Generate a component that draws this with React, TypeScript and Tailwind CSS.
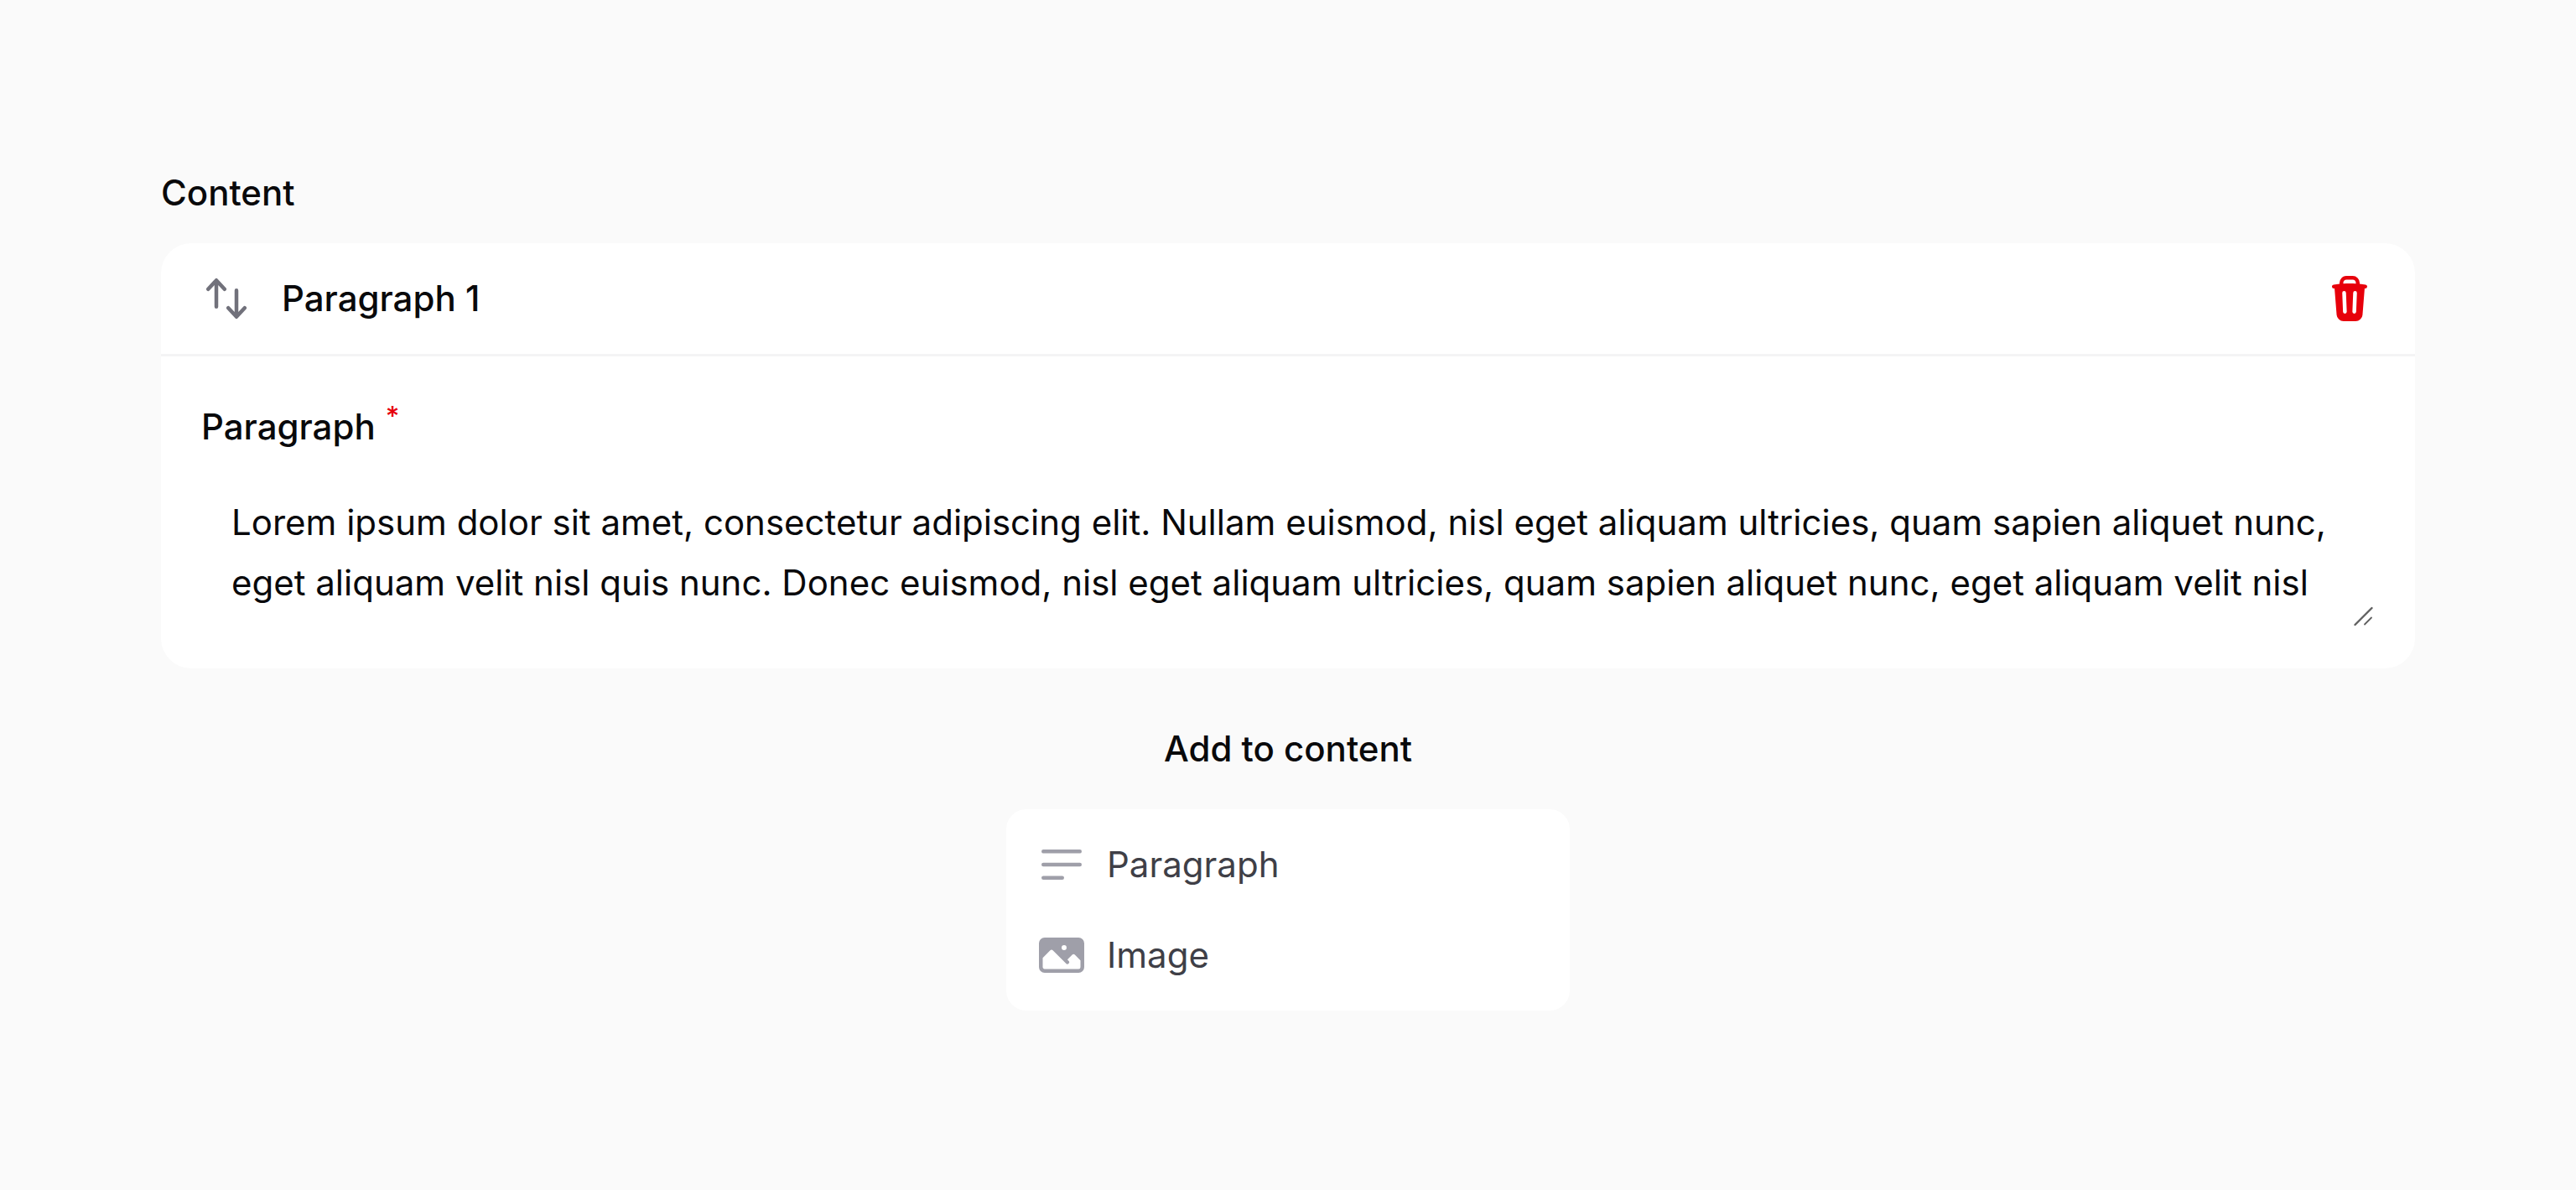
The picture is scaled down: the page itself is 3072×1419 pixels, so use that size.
import { useState } from "react";
import type { IconType } from "react-icons";
import {
  HiMiniArrowsUpDown,
  HiMiniBars3BottomLeft,
  HiMiniPhoto,
  HiMiniTrash,
} from "react-icons/hi2";

const LOREM =
  "Lorem ipsum dolor sit amet, consectetur adipiscing elit. Nullam euismod, nisl eget aliquam ultricies, quam sapien aliquet nunc, eget aliquam velit nisl quis nunc. Donec euismod, nisl eget aliquam ultricies, quam sapien aliquet nunc, eget aliquam velit nisl";

const blocks: { label: string; icon: IconType }[] = [
  { label: "Paragraph", icon: HiMiniBars3BottomLeft },
  { label: "Image", icon: HiMiniPhoto },
];

function ResizeGrip() {
  return (
    <svg
      viewBox="0 0 24 24"
      className="pointer-events-none absolute right-0.5 bottom-0.5 size-6 text-[#606060]"
      fill="none"
      stroke="currentColor"
      strokeLinecap="round"
      aria-hidden="true"
    >
      <path d="M2.5 22 22.5 2" strokeWidth="2.4" />
      <path d="m14 21.5 8-8" strokeWidth="1.8" />
    </svg>
  );
}

function BuilderItem() {
  const [text, setText] = useState(LOREM);

  return (
    <section className="w-full rounded-[36px] bg-white">
      <header className="flex items-center gap-9 px-12 py-9">
        <button type="button" aria-label="Move" className="text-zinc-500">
          <HiMiniArrowsUpDown className="size-15" />
        </button>
        <h2 className="flex-1 font-medium leading-15">Paragraph 1</h2>
        <button type="button" aria-label="Delete" className="text-[#e7000b]">
          <HiMiniTrash className="size-15" />
        </button>
      </header>
      <div className="flex flex-col gap-6 border-t-3 border-zinc-100 p-12">
        <label htmlFor="paragraph" className="font-medium">
          Paragraph
          <sup className="ml-3 text-[32px] text-[#e7000b]">*</sup>
        </label>
        <div className="relative flex">
          <textarea
            id="paragraph"
            required
            rows={2}
            value={text}
            onChange={(event) => setText(event.target.value)}
            className="w-full resize-none overflow-hidden px-9 py-[18px] outline-none"
          />
          <ResizeGrip />
        </div>
      </div>
    </section>
  );
}

export default function App() {
  return (
    <main className="min-h-screen bg-[#fafafa] px-48 pt-[194px] pb-48 font-['Inter',sans-serif] text-[42px] leading-[72px] text-zinc-950">
      <div className="flex flex-col items-center gap-6">
        <h1 className="w-full font-medium">Content</h1>
        <BuilderItem />
        <div className="mt-9 flex flex-col items-center gap-9">
          <button type="button" className="font-medium">
            Add to content
          </button>
          <div role="menu" className="w-[672px] rounded-3xl bg-white p-3">
            {blocks.map(({ label, icon: Icon }) => (
              <button
                key={label}
                type="button"
                role="menuitem"
                className="flex w-full items-center gap-6 px-6 py-[18px] text-left text-zinc-700"
              >
                <Icon className="size-15 text-zinc-400" />
                <span>{label}</span>
              </button>
            ))}
          </div>
        </div>
      </div>
    </main>
  );
}
